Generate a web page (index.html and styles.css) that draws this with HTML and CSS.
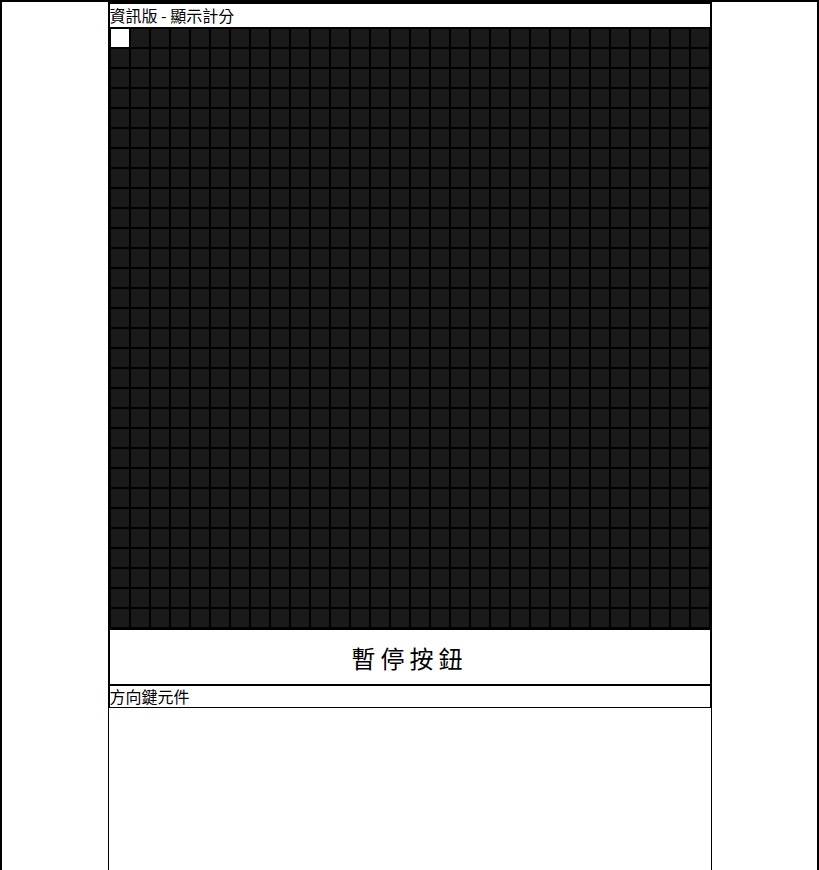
FILE: index.html
```html
<!DOCTYPE html>
<html lang="zh-Hant">
<head>
<meta charset="utf-8">
<title>Snake</title>
<link rel="stylesheet" href="styles.css">
</head>
<body>
<div class="app">
  <div class="column">
    <div class="info">資訊版 - 顯示計分</div>
    <div class="board" id="board"></div>
    <div class="pause">暫停按鈕</div>
    <div class="label">方向鍵元件</div>
  </div>
  <div class="dpad"></div>
</div>
<script src="script.js"></script>
</body>
</html>
```
FILE: styles.css
```css
html, body {
  margin: 0;
  padding: 0;
  background: #fff;
}
body {
  font-family: "Noto Sans CJK TC", "Noto Sans", sans-serif;
  color: #000;
}
.app {
  border: 2px solid #000;
  min-height: 1000px;
}
.column {
  width: 600px;
  margin: 0 auto;
  border: 2px solid #000;
  border-bottom: none;
}
.info {
  height: 23px;
  line-height: 23px;
  font-size: 16px;
  border-bottom: 1px solid #000;
}
.board {
  display: grid;
  grid-template-columns: repeat(30, 20px);
  grid-auto-rows: 20px;
  background: #000;
  border-bottom: 2px solid #000;
}
.cell {
  box-sizing: border-box;
  border: 1px solid #000;
  background: #1a1a1a;
}
.cell.snake {
  background: #fff;
}
.pause {
  height: 54px;
  display: flex;
  align-items: center;
  justify-content: center;
  font-size: 24px;
  letter-spacing: 5px;
  border-bottom: 2px solid #000;
}
.label {
  height: 21px;
  line-height: 21px;
  font-size: 16px;
  border-bottom: 1px solid #000;
}
.dpad {
  width: 602px;
  margin: 0 auto;
  height: 300px;
  border: 1px solid #000;
  border-top: none;
}
```
FILE: script.js
```js
var board = document.getElementById('board');
for (var i = 0; i < 900; i++) {
  var c = document.createElement('div');
  c.className = i === 0 ? 'cell snake' : 'cell';
  board.appendChild(c);
}
```
